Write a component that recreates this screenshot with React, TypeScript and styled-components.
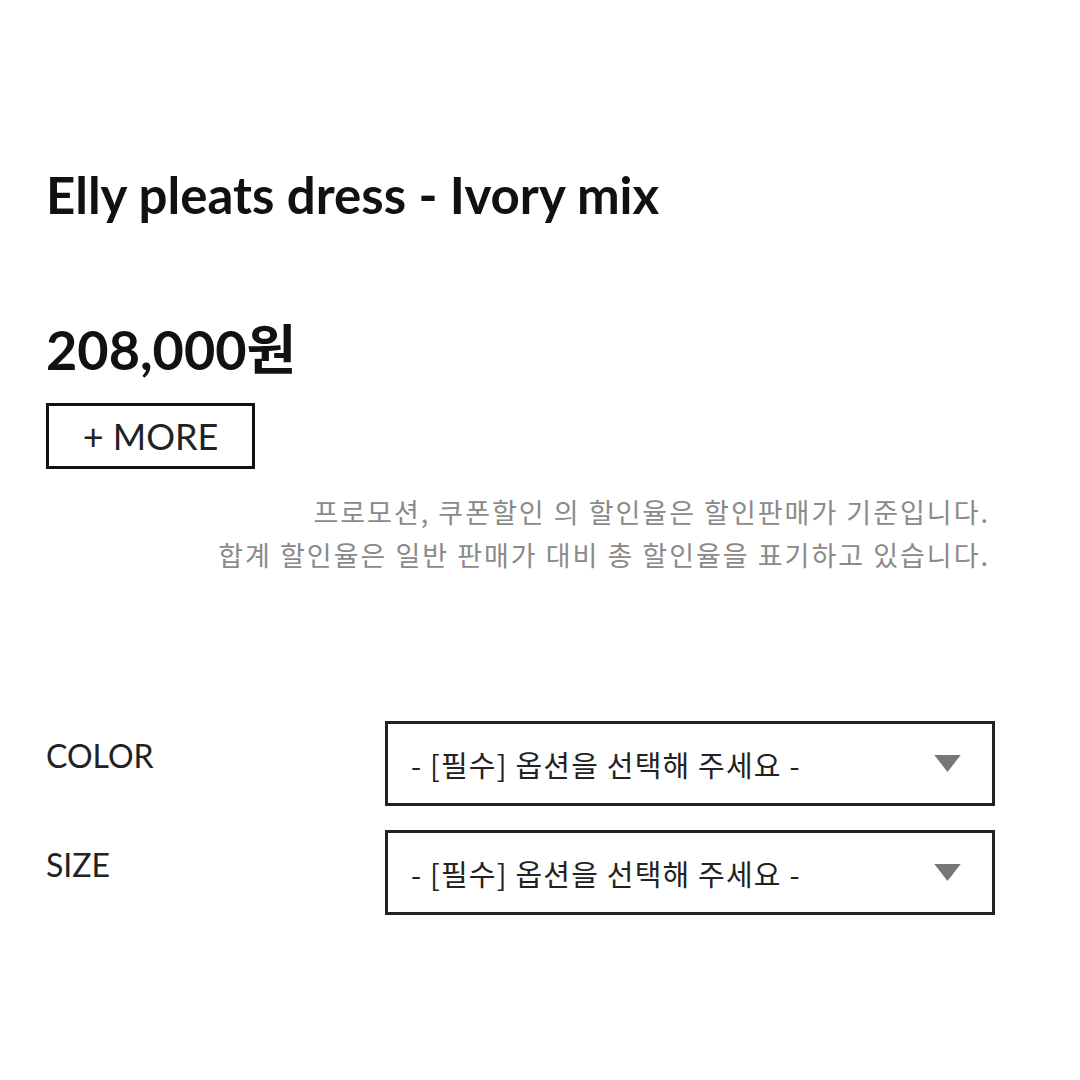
import React from "react";
import styled, { createGlobalStyle } from "styled-components";

const Global = createGlobalStyle`
  html, body { margin: 0; padding: 0; background: #fff; }
  body { font-family: Lato, "Noto Sans CJK KR", sans-serif; color: #111; }
`;

const Page = styled.div`
  width: 1080px;
  height: 1080px;
  box-sizing: border-box;
  padding: 165px 85px 0 46px;
  display: flex;
  flex-direction: column;
`;

const Title = styled.h1`
  margin: 0;
  font-family: Lato, "Noto Sans CJK KR", sans-serif;
  font-weight: 700;
  font-size: 51px;
  line-height: 60px;
  color: #111;
`;

const Price = styled.div`
  margin-top: 93px;
  font-family: Lato, "Noto Sans CJK KR", sans-serif;
  font-weight: 700;
  font-size: 54px;
  line-height: 64px;
  color: #111;
`;

const MoreButton = styled.button`
  margin-top: 21px;
  align-self: flex-start;
  width: 209px;
  height: 66px;
  box-sizing: border-box;
  border: 3px solid #111;
  background: #fff;
  font-family: Lato, sans-serif;
  font-size: 36px;
  color: #222;
  padding: 0;
  display: flex;
  align-items: center;
  justify-content: center;
`;

const Notice = styled.div`
  margin-top: 21px;
  padding-right: 5px;
  text-align: right;
  font-family: "Noto Sans CJK KR", sans-serif;
  font-size: 27px;
  letter-spacing: 2px;
  line-height: 43px;
  color: #8a8a8a;
`;

const Options = styled.div`
  margin-top: 145px;
  display: grid;
  grid-template-columns: 339px 1fr;
  row-gap: 24px;
`;

const Label = styled.div`
  font-family: Lato, sans-serif;
  font-size: 32px;
  line-height: 40px;
  padding-top: 15px;
  color: #222;
`;

const Select = styled.div`
  height: 85px;
  box-sizing: border-box;
  border: 3px solid #222;
  display: flex;
  align-items: center;
  justify-content: space-between;
  padding: 0 31px 0 23px;
`;

const SelectText = styled.span`
  font-family: "Noto Sans CJK KR", sans-serif;
  font-size: 29px;
  letter-spacing: 1.2px;
  color: #222;
`;

const Arrow = styled.svg`
  width: 27px;
  height: 17px;
  fill: #777;
`;

const Dropdown = ({ text }: { text: string }) => (
  <Select>
    <SelectText>{text}</SelectText>
    <Arrow viewBox="0 0 28 18">
      <polygon points="0,0 28,0 14,18" />
    </Arrow>
  </Select>
);

export default function App() {
  const placeholder = "- [필수] 옵션을 선택해 주세요 -";
  return (
    <>
      <Global />
      <Page>
        <Title>Elly pleats dress - Ivory mix</Title>
        <Price>208,000원</Price>
        <MoreButton>+ MORE</MoreButton>
        <Notice>
          프로모션, 쿠폰할인 의 할인율은 할인판매가 기준입니다.
          <br />
          합계 할인율은 일반 판매가 대비 총 할인율을 표기하고 있습니다.
        </Notice>
        <Options>
          <Label>COLOR</Label>
          <Dropdown text={placeholder} />
          <Label>SIZE</Label>
          <Dropdown text={placeholder} />
        </Options>
      </Page>
    </>
  );
}
